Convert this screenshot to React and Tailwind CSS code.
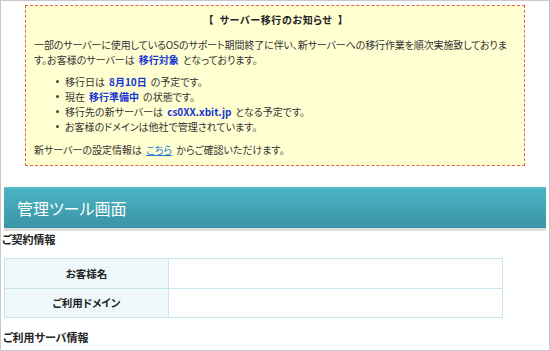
const Dot = () => <span className="mr-[6px] ml-[22px] inline-block h-[3px] w-[3px] shrink-0 rounded-full bg-[#444]" />;

const Em = ({ children }) => <span className="mx-[4px] font-bold text-[#1536d6]">{children}</span>;

export default function App() {
  return (
    <div className="h-[351px] w-[550px] overflow-hidden border border-[#c8c8c8] bg-white text-[10px] text-[#333] [font-family:'Noto_Sans_CJK_JP',sans-serif] [font-feature-settings:'palt']">
      {/* notice */}
      <div className="ml-[24px] mt-[4px] w-[500px] border border-dashed border-[#e5604f] bg-[#ffffd2] pb-[8px] pl-[8px] pr-[6px] pt-[7px]">
        <p className="whitespace-pre text-center font-bold leading-[14px] tracking-[0.6px] text-[#222]">{'【  サーバー移行のお知らせ  】'}</p>
        <p className="mt-[10px] leading-[15px]">
          <span className="whitespace-nowrap tracking-[-0.12px]">一部のサーバーに使用しているOSのサポート期間終了に伴い、新サーバーへの移行作業を順次実施致しておりま</span>
          <br />
          す。お客様のサーバーは<Em>移行対象</Em>となっております。
        </p>
        <ul className="mt-[7px] leading-[15px]">
          <li className="flex items-center"><Dot />移行日は<Em>8月10日</Em>の予定です。</li>
          <li className="flex items-center"><Dot />現在<Em>移行準備中</Em>の状態です。</li>
          <li className="flex items-center"><Dot />移行先の新サーバーは<Em>cs0XX.xbit.jp</Em>となる予定です。</li>
          <li className="flex items-center"><Dot />お客様のドメインは他社で管理されています。</li>
        </ul>
        <p className="mt-[8px] leading-[15px]">
          新サーバーの設定情報は<a className="mx-[4px] text-[#2a7fd0] underline">こちら</a>からご確認いただけます。
        </p>
      </div>

      {/* header */}
      <div className="ml-[3px] mt-[21px] flex h-[41px] w-[542px] items-center border-t border-[#5cc0cc] bg-gradient-to-b from-[#4cb4c3] to-[#3a94a6] pl-[13px] text-[16px] text-white shadow-[0_3px_0_#dddddd]">
        管理ツール画面
      </div>

      <p className="ml-[1px] mt-[4px] text-[11px] font-bold leading-[14px] text-[#222]">ご契約情報</p>

      <table className="ml-[3px] mt-[12px] w-[499px] border-collapse text-[10.5px]">
        <tbody>
          <tr className="h-[30px]">
            <th className="w-[164px] border border-[#c8e4ec] bg-[#eef8fb] font-bold text-[#222]">お客様名</th>
            <td className="border border-[#c8e4ec]"></td>
          </tr>
          <tr className="h-[29px]">
            <th className="border border-[#c8e4ec] bg-[#eef8fb] font-bold text-[#222]">ご利用ドメイン</th>
            <td className="border border-[#c8e4ec]"></td>
          </tr>
        </tbody>
      </table>

      <p className="ml-[2px] mt-[12px] text-[11px] font-bold leading-[14px] text-[#222]">ご利用サーバ情報</p>
    </div>
  );
}
